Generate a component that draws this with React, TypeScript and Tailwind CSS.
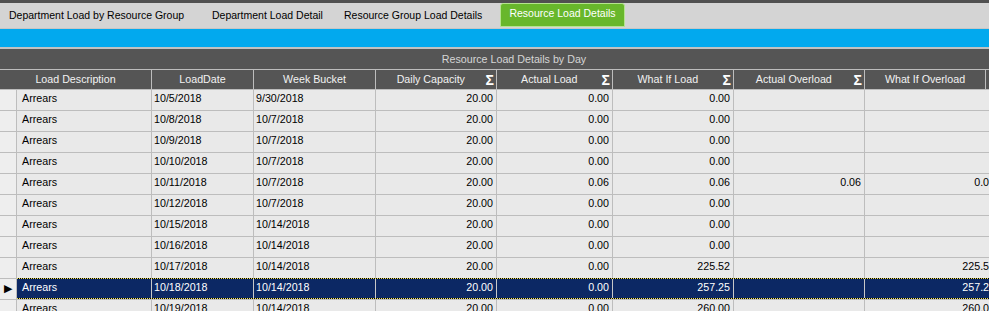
import React from 'react';

type Row = {
  desc: string;
  date: string;
  week: string;
  cap: string;
  actual: string;
  whatIf: string;
  overload: string;
  whatIfOver: string;
};

const rows: Row[] = [
  { desc: 'Arrears', date: '10/5/2018', week: '9/30/2018', cap: '20.00', actual: '0.00', whatIf: '0.00', overload: '', whatIfOver: '' },
  { desc: 'Arrears', date: '10/8/2018', week: '10/7/2018', cap: '20.00', actual: '0.00', whatIf: '0.00', overload: '', whatIfOver: '' },
  { desc: 'Arrears', date: '10/9/2018', week: '10/7/2018', cap: '20.00', actual: '0.00', whatIf: '0.00', overload: '', whatIfOver: '' },
  { desc: 'Arrears', date: '10/10/2018', week: '10/7/2018', cap: '20.00', actual: '0.00', whatIf: '0.00', overload: '', whatIfOver: '' },
  { desc: 'Arrears', date: '10/11/2018', week: '10/7/2018', cap: '20.00', actual: '0.06', whatIf: '0.06', overload: '0.06', whatIfOver: '0.06' },
  { desc: 'Arrears', date: '10/12/2018', week: '10/7/2018', cap: '20.00', actual: '0.00', whatIf: '0.00', overload: '', whatIfOver: '' },
  { desc: 'Arrears', date: '10/15/2018', week: '10/14/2018', cap: '20.00', actual: '0.00', whatIf: '0.00', overload: '', whatIfOver: '' },
  { desc: 'Arrears', date: '10/16/2018', week: '10/14/2018', cap: '20.00', actual: '0.00', whatIf: '0.00', overload: '', whatIfOver: '' },
  { desc: 'Arrears', date: '10/17/2018', week: '10/14/2018', cap: '20.00', actual: '0.00', whatIf: '225.52', overload: '', whatIfOver: '225.52' },
  { desc: 'Arrears', date: '10/18/2018', week: '10/14/2018', cap: '20.00', actual: '0.00', whatIf: '257.25', overload: '', whatIfOver: '257.25' },
  { desc: 'Arrears', date: '10/19/2018', week: '10/14/2018', cap: '20.00', actual: '0.00', whatIf: '260.00', overload: '', whatIfOver: '260.00' },
];

// tab label + the width of its slot in the strip
const tabs: [string, string][] = [
  ['Department Load by Resource Group', 'w-[203px]'],
  ['Department Load Detail', 'w-[132px]'],
  ['Resource Group Load Details', 'w-[156px]'],
];

function Sigma() {
  return <span className="font-bold text-[14px] leading-none text-white pr-[2px]">Σ</span>;
}

function HeadCell({ w, label, sigma }: { w: string; label: string; sigma?: boolean }) {
  return (
    <div className={`${w} shrink-0 flex items-center border-r border-[#bdbdbd] h-full`}>
      <span className="flex-1 text-center">{label}</span>
      {sigma && <Sigma />}
    </div>
  );
}

export default function App() {
  return (
    <div
      className="w-[989px] h-[311px] overflow-hidden bg-[#e9e9e9] text-[10.7px]"
      style={{ fontFamily: '"Liberation Sans", Arial, sans-serif' }}
    >
      <div className="h-[3px] bg-[#505050]" />
      <div className="h-[26px] bg-[#d4d4d4] border-b border-[#c6c6c6] flex items-end pl-[9px] text-[10.5px]">
        {tabs.map(([t, w]) => (
          <div key={t} className={`${w} shrink-0 h-[24px] flex items-center text-black`}>
            {t}
          </div>
        ))}
        <div className="w-[125px] shrink-0 h-[24px] mb-[1px] rounded-t-[3px] border border-[#b5e48f] bg-[#68b72b] text-white flex items-center justify-center pb-[2px]">
          Resource Load Details
        </div>
      </div>
      <div className="h-[18px] bg-[#02a9ee]" />
      <div className="h-[2px] bg-[#c2c2c2]" />

      <div className="w-[1028px]">
        <div className="h-[20px] bg-[#555555] text-[#d6d6d6] flex items-center justify-center">
          Resource Load Details by Day
        </div>
        <div className="h-[21px] bg-[#555555] text-[#f2f2f2] flex border-y border-[#bdbdbd]">
          <HeadCell w="w-[152px]" label="Load Description" />
          <HeadCell w="w-[102px]" label="LoadDate" />
          <HeadCell w="w-[122px]" label="Week Bucket" />
          <HeadCell w="w-[121px]" label="Daily Capacity" sigma />
          <HeadCell w="w-[116px]" label="Actual Load" sigma />
          <HeadCell w="w-[121px]" label="What If Load" sigma />
          <HeadCell w="w-[131px]" label="Actual Overload" sigma />
          <HeadCell w="w-[121px]" label="What If Overload" />
        </div>

        {rows.map((r, i) => {
          const sel = i === 9;
          const cell = `shrink-0 h-full border-r flex items-center pb-[3px] ${sel ? 'border-[#c8c8c8]' : 'border-[#bdbdbd]'}`;
          return (
            <div key={i} className="h-[21px] flex border-b border-[#bdbdbd]">
              <div className="w-[17px] shrink-0 h-full bg-[#eeeeee] border-r border-[#bdbdbd] flex items-center pl-[4px] pb-[1px]">
                {sel && <span className="text-[11px] text-black leading-none">▶</span>}
              </div>
              <div className={`relative flex h-full ${sel ? 'bg-[#0c2864] text-white' : 'text-black'}`}>
                <div className={`${cell} w-[135px] pl-[5px]`}>{r.desc}</div>
                <div className={`${cell} w-[102px] pl-[2px]`}>{r.date}</div>
                <div className={`${cell} w-[122px] pl-[2px]`}>{r.week}</div>
                <div className={`${cell} w-[121px] justify-end pr-[3px]`}>{r.cap}</div>
                <div className={`${cell} w-[116px] justify-end pr-[3px]`}>{r.actual}</div>
                <div className={`${cell} w-[121px] justify-end pr-[3px]`}>{r.whatIf}</div>
                <div className={`${cell} w-[131px] justify-end pr-[3px]`}>{r.overload}</div>
                <div className={`${cell} w-[134px] justify-end pr-[3px]`}>{r.whatIfOver}</div>
                {sel && (
                  <div className="absolute left-0 right-0 top-[-1px] bottom-[0px] pointer-events-none">
                    <div className="h-[1px] bg-[repeating-linear-gradient(90deg,#f2e35a_0_1px,#000_1px_2px)]" />
                    <div className="absolute bottom-0 left-0 right-0 h-[1px] bg-[repeating-linear-gradient(90deg,#f2e35a_0_1px,#000_1px_2px)]" />
                  </div>
                )}
              </div>
            </div>
          );
        })}
      </div>
    </div>
  );
}
